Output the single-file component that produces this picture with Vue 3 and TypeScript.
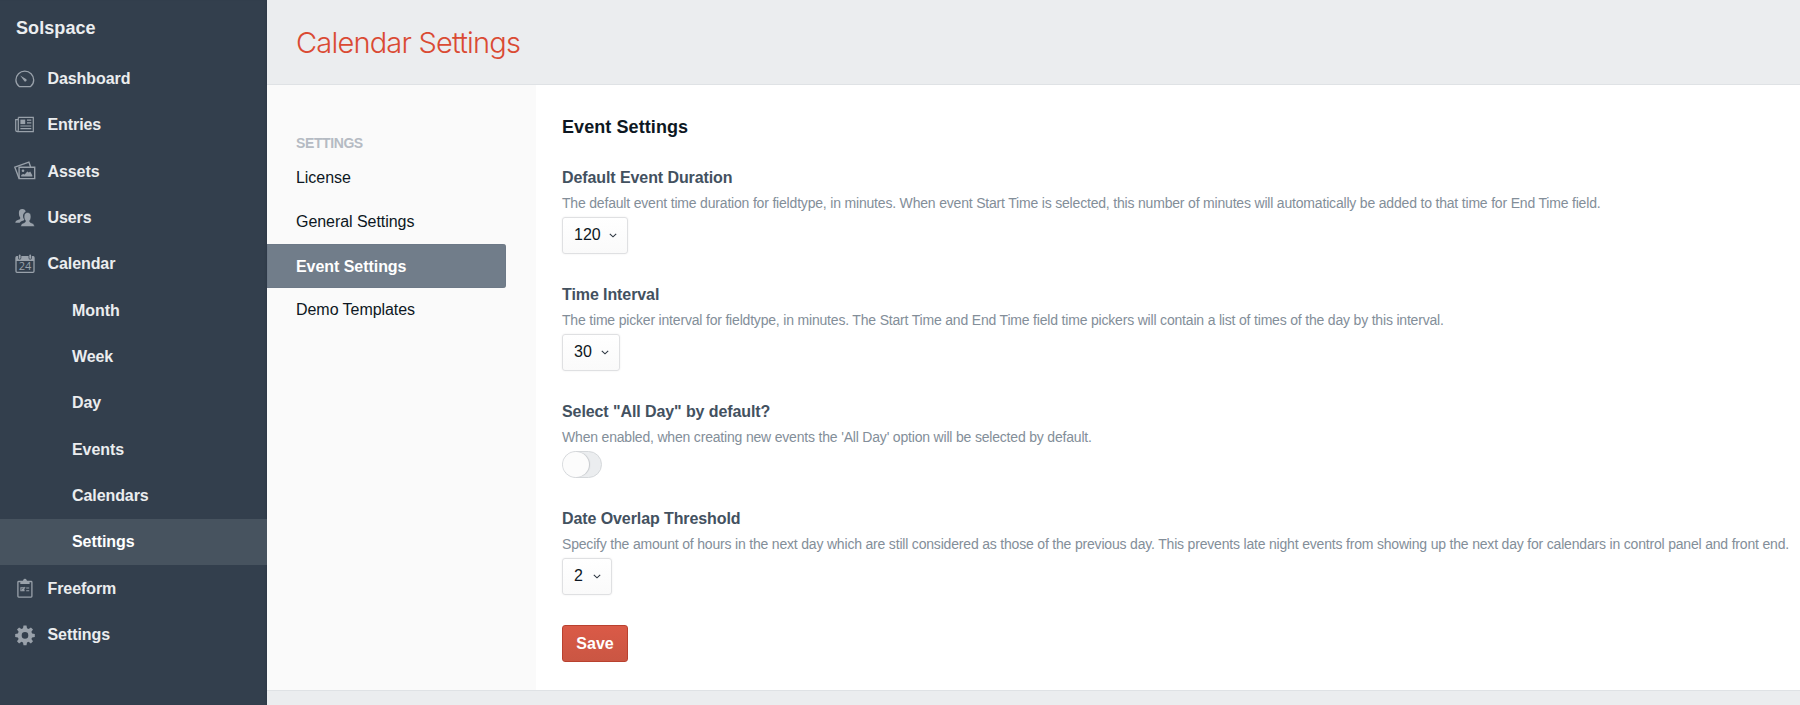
<script setup lang="ts">
interface NavItem {
  label: string
  icon?: string
  active?: boolean
}

interface Field {
  label: string
  help: string
  kind: 'select' | 'toggle'
  value?: string
  size?: string
}

const nav: NavItem[] = [
  { label: 'Dashboard', icon: 'gauge' },
  { label: 'Entries', icon: 'news' },
  { label: 'Assets', icon: 'photos' },
  { label: 'Users', icon: 'users' },
  { label: 'Calendar', icon: 'calendar' },
  { label: 'Month' },
  { label: 'Week' },
  { label: 'Day' },
  { label: 'Events' },
  { label: 'Calendars' },
  { label: 'Settings', active: true },
  { label: 'Freeform', icon: 'clipboard' },
  { label: 'Settings', icon: 'gear' },
]

const sections = ['License', 'General Settings', 'Event Settings', 'Demo Templates']
const currentSection = 'Event Settings'

const fields: Field[] = [
  {
    label: 'Default Event Duration',
    help: 'The default event time duration for fieldtype, in minutes. When event Start Time is selected, this number of minutes will automatically be added to that time for End Time field.',
    kind: 'select',
    value: '120',
    size: 'large',
  },
  {
    label: 'Time Interval',
    help: 'The time picker interval for fieldtype, in minutes. The Start Time and End Time field time pickers will contain a list of times of the day by this interval.',
    kind: 'select',
    value: '30',
    size: 'medium',
  },
  {
    label: 'Select "All Day" by default?',
    help: "When enabled, when creating new events the 'All Day' option will be selected by default.",
    kind: 'toggle',
  },
  {
    label: 'Date Overlap Threshold',
    help: 'Specify the amount of hours in the next day which are still considered as those of the previous day. This prevents late night events from showing up the next day for calendars in control panel and front end.',
    kind: 'select',
    value: '2',
    size: 'small',
  },
]
</script>

<template>
  <div class="app">
    <aside class="sidebar">
      <div class="site">Solspace</div>
      <nav class="nav">
        <a v-for="(item, i) in nav" :key="i" class="nav-item" :class="{ sub: !item.icon, active: item.active }">
          <svg v-if="item.icon" class="icon" viewBox="0 0 22 22" width="22" height="22">
            <g v-if="item.icon === 'gauge'" fill="none" stroke="currentColor" stroke-width="1.3">
              <path d="M5.2 18.6C3.3 17.1 1.9 14.8 1.9 12.1a8.9 8.9 0 0 1 17.8 0c0 2.7-1.2 5-3.1 6.5Z" stroke-linejoin="round" />
              <path d="M6.2 7.4l6.2 3.900a1.500 1.500 0 0 1-1.800 2.200Z" fill="currentColor" stroke="none" />
            </g>
            <g v-else-if="item.icon === 'news'" fill="none" stroke="currentColor" stroke-width="1.2">
              <path d="M4.3 3.4h15v14.3H3.6c-1.1 0-1.9-.8-1.9-1.9V5.6h2.6M4.3 3.4v12.4c0 1-.3 1.7-1 1.7" />
              <path d="M6.4 5.6h4.8v4.5H6.4z" fill="currentColor" stroke="none" />
              <path d="M13 6.2h4.3M13 8.9h4.3M6.4 12h10.9M6.4 14.7h10.9" />
            </g>
            <g v-else-if="item.icon === 'photos'" fill="none" stroke="currentColor" stroke-width="1.4">
              <path d="M5.1 7.2h15.600v11.4H5.1z" />
              <path d="M5 18.3L.8 7.2 14.9 2.1l1.7 4.8" />
              <path d="M7.2 16.6v-1.5l1.9-1.2 1.6.6 2.6-3.1 1.5 1.1 1.4-1 2.1 3.8v1.3Z" fill="currentColor" stroke="none" />
              <circle cx="9" cy="10.7" r="1.3" fill="currentColor" stroke="none" />
            </g>
            <g v-else-if="item.icon === 'users'" fill="currentColor">
              <path d="M8.3 2c2 0 3.200.9 3.300 2.800-2.200 1.100-2.800 3-2.400 5.400.2.900.6 1.500 1 2-.1 1.100-.7 1.300-2.300 1.900-1 .4-1.700.9-2.200 1.700H1.300c.2-2 1.500-2.400 3.100-3 1.400-.5 1.900-.7 1.900-2.100C5 9.100 5 7.800 4.900 6 4.800 3.400 6 2 8.300 2Z" />
              <path d="M13.500 5.500c2.200 0 3.500 1.400 3.400 3.800 0 2-.2 3.300-1.300 4.400 0 1.300.4 1.700 2 2.300 1.700.6 2.700 1.200 2.800 3.500H6.800c.1-2.300 1.100-2.900 2.800-3.500 1.500-.6 1.900-1 1.900-2.300-1.100-1.100-1.400-2.400-1.400-4.400 0-2.400 1.300-3.800 3.400-3.800Z" stroke="#333f4d" stroke-width=".5" />
            </g>
            <g v-else-if="item.icon === 'calendar'">
              <path d="M1.900 3.600h18.200v4.400H1.900z" fill="currentColor" />
              <rect x="2" y="3.700" width="18" height="15.600" rx="1" fill="none" stroke="currentColor" stroke-width="1.300" />
              <path d="M5.700 2.500v2.400M16.200 2.500v2.400" stroke="#333f4d" stroke-width="3.200" stroke-linecap="round" />
              <path d="M5.700 2.300v2.600M16.200 2.300v2.600" stroke="currentColor" stroke-width="1.800" stroke-linecap="round" />
              <text x="11" y="17" text-anchor="middle" class="icon-text">24</text>
            </g>
            <g v-else-if="item.icon === 'clipboard'" fill="none" stroke="currentColor" stroke-width="1.300">
              <rect x="3.900" y="4.500" width="14" height="15.600" rx=".8" />
              <path d="M6.300 7V5.200l2-.9c.6-.2.900-.5 1-1.200a1.700 1.700 0 0 1 3.300 0c.1.700.4 1 1 1.200l2 .9V7Z" fill="currentColor" stroke="none" />
              <path d="M10 10.700H6.900v3H10v-1.200M8 11.900l.8.900 2.300-2.700M12.200 11h3M12.200 13.700h3" stroke-width="1.100" />
            </g>
            <path
              v-else
              fill="currentColor"
              fill-rule="evenodd"
              d="M9.500 1.600h3l.5 2.700 1.600.7 2.300-1.600 2.100 2.100-1.600 2.300.7 1.600 2.700.5v3l-2.700.5-.7 1.600 1.600 2.300-2.100 2.100-2.300-1.600-1.600.7-.5 2.700h-3L9 18.500l-1.600-.7-2.300 1.600L3 17.300 4.600 15l-.7-1.600-2.700-.5v-3l2.700-.5.7-1.600L3 5.500l2.100-2.100L7.400 5 9 4.300ZM11 8.100a3.300 3.300 0 1 0 0 6.600 3.300 3.300 0 0 0 0-6.600Z"
            />
          </svg>
          <span>{{ item.label }}</span>
        </a>
      </nav>
    </aside>

    <div class="main">
      <header class="header"><h1>Calendar Settings</h1></header>
      <div class="body">
        <div class="sections">
          <h6>SETTINGS</h6>
          <a v-for="s in sections" :key="s" class="section" :class="{ current: s === currentSection }">{{ s }}</a>
        </div>
        <main class="content">
          <h2>Event Settings</h2>
          <div v-for="f in fields" :key="f.label" class="field" :class="`field-${f.kind}`">
            <div class="label">{{ f.label }}</div>
            <p class="help">{{ f.help }}</p>
            <button v-if="f.kind === 'select'" class="select" :class="f.size" type="button">
              <span>{{ f.value }}</span>
              <svg viewBox="0 0 8 5" width="8" height="5"><path d="M.8.8 4 3.800 7.200.8" fill="none" stroke="currentColor" stroke-width="1.100" /></svg>
            </button>
            <div v-else class="switch" role="switch" aria-checked="false"><i></i></div>
          </div>
          <button class="save" type="button">Save</button>
        </main>
      </div>
      <footer class="footer"></footer>
    </div>
  </div>
</template>

<style>
html,
body {
  margin: 0;
  overflow: hidden;
}
</style>

<style scoped>
* {
  box-sizing: border-box;
}
.app {
  display: flex;
  width: 1800px;
  height: 705px;
  overflow: hidden;
  font-family: 'Liberation Sans', Arial, sans-serif;
  font-size: 16px;
  color: #0d1722;
  background: #fff;
}
.sidebar {
  flex: none;
  width: 267px;
  background: #333f4d;
  color: #ebedef;
  font-weight: bold;
  letter-spacing: -0.080px;
  box-shadow: inset -2px 0 2px -1px rgba(20, 30, 45, 0.15);
}
.site {
  height: 55.500px;
  padding: 0 16px;
  line-height: 56px;
  font-size: 18px;
  letter-spacing: 0.080px;
}
.nav-item {
  display: flex;
  align-items: center;
  height: 46.330px;
  padding-left: 14px;
}
.nav-item span {
  padding-top: 1px;
}
.nav-item.sub {
  padding-left: 72px;
}
.nav-item.active {
  background: #47535f;
  color: #fff;
}
.icon {
  margin-right: 11.500px;
  color: #99a1aa;
}
.icon-text {
  font: 11px 'Open Sans', sans-serif;
  fill: currentColor;
}
.main {
  flex: 1;
  min-width: 0;
  display: flex;
  flex-direction: column;
}
.header {
  height: 85px;
  padding-left: 29px;
  background: #ebedef;
  border-bottom: 1px solid #dfe2e5;
}
h1 {
  margin: 0;
  line-height: 85px;
  font-family: Inter, 'Liberation Sans', sans-serif;
  font-size: 29px;
  font-weight: 300;
  letter-spacing: -0.800px;
  color: #da4a33;
}
.body {
  flex: 1;
  display: flex;
}
.sections {
  flex: none;
  width: 269px;
  padding-top: 48px;
  background: #fafafa;
}
h6 {
  margin: 0;
  padding-left: 29px;
  line-height: 20px;
  font-size: 14px;
  letter-spacing: -0.400px;
  color: #b5bbc3;
}
.section {
  display: block;
  width: 239px;
  height: 44px;
  padding-left: 29px;
  line-height: 44px;
  letter-spacing: -0.050px;
}
.section:nth-of-type(1) {
  margin-top: 3px;
}
.section.current {
  border-radius: 0 3px 3px 0;
  background: #717d8a;
  box-shadow: inset 0 0 1px #566270;
  color: #fff;
  font-weight: bold;
  line-height: 45px;
}
.content {
  padding: 31px 0 0 26px;
  white-space: nowrap;
}
h2 {
  margin: 0 0 30px;
  line-height: 22px;
  font-size: 18px;
  letter-spacing: 0.080px;
}
.field {
  height: 117px;
}
.field-toggle {
  height: 107px;
}
.label {
  line-height: 20px;
  font-weight: bold;
  letter-spacing: -0.090px;
  color: #43515f;
}
.help {
  margin: 5px 0 4px;
  line-height: 20px;
  font-size: 14px;
  letter-spacing: -0.187px;
  color: #838e99;
}
.select {
  display: flex;
  align-items: center;
  justify-content: space-between;
  height: 37px;
  padding: 0 10px 1px 11px;
  border: 1px solid #dfe0e2;
  border-radius: 3px;
  background: linear-gradient(#fff, #fafafa);
  box-shadow: 0 0 2px rgba(0, 0, 0, 0.08);
  font: inherit;
  color: #0d1722;
}
.select.large {
  width: 66px;
}
.select.medium {
  width: 58px;
}
.select.small {
  width: 50px;
}
.select svg {
  color: #2c3540;
}
.switch {
  width: 40px;
  height: 27px;
  border: 1px solid #d5d8db;
  border-radius: 14px;
  background: #ebedef;
}
.switch i {
  display: block;
  width: 26px;
  height: 25px;
  border-radius: 13px;
  background: #fcfcfc;
  box-shadow: 1px 0 1px #c5c8cc;
}
.save {
  display: block;
  width: 66px;
  height: 37px;
  margin-top: -1px;
  padding: 0;
  border: 1px solid #b9412f;
  border-radius: 3px;
  background: linear-gradient(#da5a47, #ca5643);
  color: #fff;
  font: bold 16px 'Liberation Sans', Arial, sans-serif;
}
.footer {
  height: 15px;
  background: #ebedef;
  border-top: 1px solid #dfe2e5;
}
</style>
